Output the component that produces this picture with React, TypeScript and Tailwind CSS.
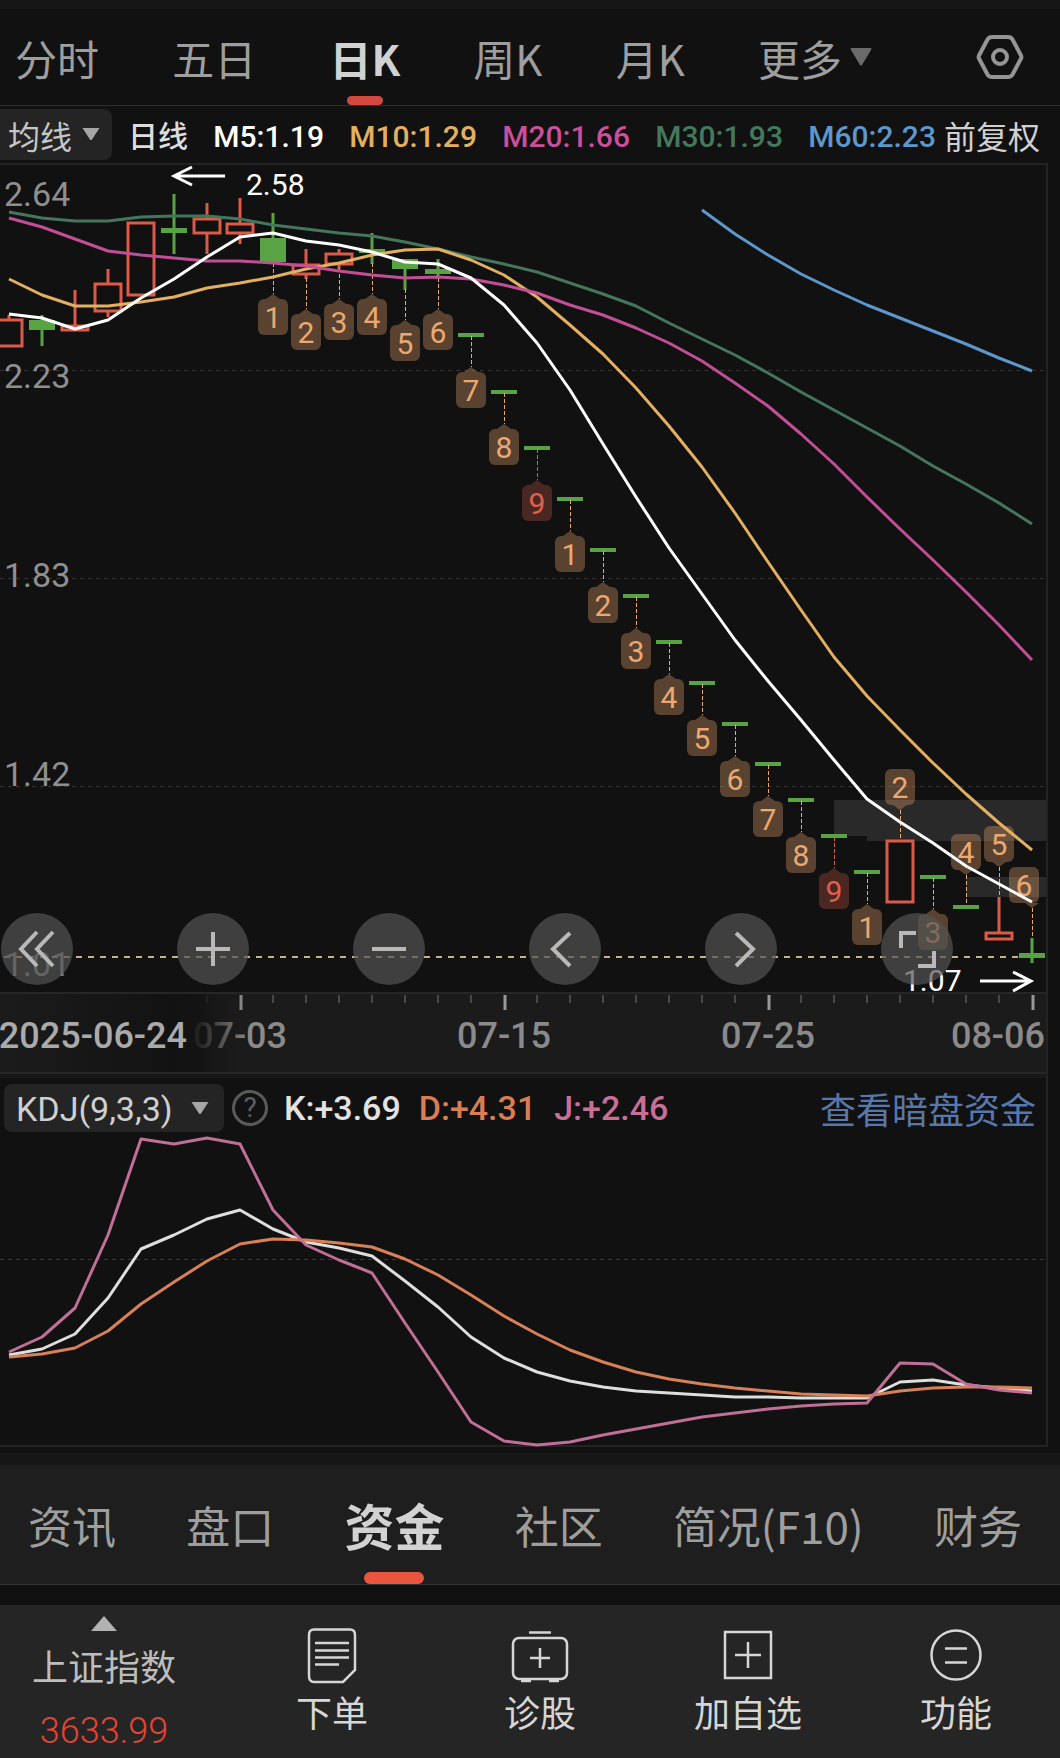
import { useState } from 'react';
import type { ReactNode } from 'react';
import clsx from 'clsx';

type Candle = {
  up?: boolean;
  body: [number, number];
  wick?: [number, number];
};

type Tag = {
  index: number;
  label: string;
  above?: boolean;
  shift?: number;
};

const RED = '#dc5a48';
const GREEN = '#5aa345';

const xOf = (index: number) => 9 + index * 33;

// One entry for each trading day, in chart coordinates
const candles: Candle[] = [
  { up: true, body: [319, 347], wick: [315, 347] },
  { body: [320, 330], wick: [315, 346] },
  { up: true, body: [325, 331], wick: [290, 331] },
  { up: true, body: [283, 312], wick: [269, 317] },
  { up: true, body: [222, 296] },
  { body: [228, 233], wick: [194, 254] },
  { up: true, body: [218, 234], wick: [203, 254] },
  { up: true, body: [223, 234], wick: [198, 244] },
  { body: [238, 262], wick: [213, 264] },
  { up: true, body: [264, 275], wick: [249, 279] },
  { up: true, body: [253, 265], wick: [249, 269] },
  { body: [249, 253], wick: [233, 264] },
  { body: [259, 269], wick: [259, 290] },
  { body: [269, 274], wick: [259, 279] },
  { body: [333, 337] },
  { body: [390, 394] },
  { body: [446, 450] },
  { body: [497, 501] },
  { body: [548, 552] },
  { body: [594, 598] },
  { body: [640, 644] },
  { body: [681, 685] },
  { body: [722, 726] },
  { body: [762, 766] },
  { body: [798, 802] },
  { body: [834, 838] },
  { body: [870, 874] },
  { up: true, body: [840, 903] },
  { body: [875, 879] },
  { body: [905, 909] },
  { up: true, body: [932, 940], wick: [897, 940] },
  { body: [953, 958], wick: [938, 963] },
];

const tags: Tag[] = [
  { index: 8, label: '1' },
  { index: 9, label: '2' },
  { index: 10, label: '3' },
  { index: 11, label: '4' },
  { index: 12, label: '5' },
  { index: 13, label: '6' },
  { index: 14, label: '7' },
  { index: 15, label: '8' },
  { index: 16, label: '9' },
  { index: 17, label: '1' },
  { index: 18, label: '2' },
  { index: 19, label: '3' },
  { index: 20, label: '4' },
  { index: 21, label: '5' },
  { index: 22, label: '6' },
  { index: 23, label: '7' },
  { index: 24, label: '8' },
  { index: 25, label: '9' },
  { index: 26, label: '1' },
  { index: 27, label: '2', above: true },
  { index: 28, label: '3' },
  { index: 29, label: '4', above: true },
  { index: 30, label: '5', above: true },
  { index: 31, label: '6', above: true, shift: -8 },
];

const averages = [
  {
    color: '#45765d',
    start: 0,
    values: [212, 218, 221, 221, 217, 216, 216, 219, 225, 229, 233, 236, 242, 249, 257, 264, 272, 283, 294, 306, 323, 339, 355, 373, 392, 410, 428, 446, 466, 484, 503, 524],
  },
  {
    color: '#e2b060',
    start: 0,
    values: [279, 295, 306, 306, 302, 297, 288, 283, 277, 269, 263, 255, 250, 249, 260, 275, 297, 325, 354, 388, 426, 467, 513, 562, 610, 657, 696, 730, 763, 794, 823, 850],
  },
  {
    color: '#c24f96',
    start: 0,
    values: [218, 227, 239, 251, 255, 258, 261, 261, 263, 266, 271, 275, 278, 277, 279, 285, 293, 305, 315, 328, 343, 361, 383, 406, 434, 464, 497, 529, 560, 592, 625, 660],
  },
  {
    color: '#ffffff',
    start: 0,
    values: [314, 318, 329, 320, 298, 279, 257, 237, 233, 241, 245, 252, 262, 264, 278, 305, 343, 390, 444, 497, 548, 594, 640, 681, 720, 760, 799, 822, 843, 866, 884, 902],
  },
  {
    color: '#5d97cb',
    start: 21,
    values: [210, 234, 255, 274, 290, 305, 318, 331, 344, 358, 371],
  },
];

const kdjLines = [
  {
    color: '#dedede',
    values: [1355, 1349, 1334, 1298, 1249, 1235, 1219, 1210, 1229, 1242, 1248, 1256, 1281, 1307, 1337, 1358, 1372, 1381, 1387, 1391, 1393, 1395, 1397, 1397, 1398, 1398, 1398, 1382, 1380, 1385, 1388, 1391],
  },
  {
    color: '#d88058',
    values: [1357, 1354, 1348, 1331, 1304, 1282, 1261, 1244, 1239, 1240, 1243, 1247, 1259, 1275, 1295, 1316, 1334, 1350, 1362, 1372, 1379, 1384, 1388, 1391, 1394, 1395, 1396, 1391, 1388, 1387, 1387, 1388],
  },
  {
    color: '#c06f95',
    values: [1352, 1337, 1308, 1235, 1139, 1144, 1138, 1144, 1210, 1245, 1260, 1273, 1323, 1372, 1422, 1441, 1445, 1442, 1435, 1429, 1423, 1417, 1413, 1409, 1406, 1404, 1403, 1363, 1364, 1384, 1390, 1393],
  },
];

const priceLabels = [
  { y: 206, text: '2.64' },
  { y: 388, text: '2.23' },
  { y: 587, text: '1.83' },
  { y: 786, text: '1.42' },
  { y: 976, text: '1.01' },
];

const legend = [
  { text: 'M5:1.19', className: 'text-white' },
  { text: 'M10:1.29', className: 'text-[#e2b060]' },
  { text: 'M20:1.66', className: 'text-[#cb4f9b]' },
  { text: 'M30:1.93', className: 'text-[#45795e]' },
  { text: 'M60:2.23', className: 'text-[#5d97cb]' },
];

const toPoints = (values: number[], start = 0) =>
  values.map((y, i) => `${xOf(start + i)},${y}`).join(' ');

function Caret({ className }: { className?: string }) {
  return (
    <svg viewBox="0 0 20 14" className={clsx('pointer-events-none', className)} aria-hidden="true">
      <path d="M1.5 1h17L11 12.6q-1 1-2 0z" fill="currentColor" />
    </svg>
  );
}

function CandleShape({ index, candle }: { index: number; candle: Candle }) {
  const x = xOf(index);
  const [top, bottom] = candle.body;
  const color = candle.up ? RED : GREEN;

  return (
    <g>
      {candle.wick && candle.wick[0] < top && (
        <path d={`M${x} ${candle.wick[0]}V${top}`} stroke={color} strokeWidth="3" />
      )}
      {candle.wick && candle.wick[1] > bottom && (
        <path d={`M${x} ${bottom}V${candle.wick[1]}`} stroke={color} strokeWidth="3" />
      )}
      {candle.up ? (
        <rect x={x - 13} y={top + 1} width="26" height={bottom - top - 2} fill="none" stroke={color} strokeWidth="3" />
      ) : (
        <rect x={x - 13} y={top} width="26" height={bottom - top} fill={color} />
      )}
    </g>
  );
}

function TagShape({ tag }: { tag: Tag }) {
  const x = xOf(tag.index);
  const { body, wick } = candles[tag.index];
  const [high, low] = wick ?? body;
  const tip = tag.above ? high - 30 : low + 30;
  const boxX = x - 15 + (tag.shift ?? 0);
  const boxY = tag.above ? tip - 41 : tip + 5;
  const color = tag.label === '9' ? '#e2604b' : '#eba871';

  return (
    <g>
      <path
        d={tag.above ? `M${x}.5 ${tip}V${high}` : `M${x}.5 ${low - 1}V${tip}`}
        stroke={color}
        strokeWidth="1"
        strokeDasharray="4 2"
      />
      <g fill={color} opacity={tag.label === '9' ? 0.28 : 0.33}>
        <rect x={boxX} y={boxY} width="30" height="36" rx="6" />
        <path d={tag.above ? `M${x - 7} ${tip - 5}h14l-7 5z` : `M${x - 7} ${tip + 5}h14l-7 -5z`} />
      </g>
      <text x={boxX + 15} y={boxY + 29} textAnchor="middle" fill={color} className="text-[30px]">
        {tag.label}
      </text>
    </g>
  );
}

function PriceChart() {
  return (
    <svg viewBox="0 165 1046 829" className="block w-full overflow-visible" role="img" aria-label="日K线图">
      <rect x="834" y="800" width="212" height="36" fill="#292929" />
      <rect x="867" y="836" width="179" height="5" fill="#292929" />
      <rect x="966" y="877" width="80" height="20" fill="#292929" />

      {[370, 578, 786].map(y => (
        <path key={y} d={`M0 ${y}.5H1046`} stroke="#333333" strokeDasharray="4 4" />
      ))}
      <path d="M4 957H1020" stroke="#c8b184" strokeWidth="2" strokeDasharray="6 6" />
      <path d="M0 993H1046" stroke="#262626" strokeWidth="2" />

      {priceLabels.map(label => (
        <text key={label.text} x="4" y={label.y} fill="#8f8f8f" className="text-[34px]">
          {label.text}
        </text>
      ))}

      {candles.map((candle, i) => (
        <CandleShape key={i} index={i} candle={candle} />
      ))}
      {tags.map(tag => (
        <TagShape key={tag.index} tag={tag} />
      ))}
      {averages.map(line => (
        <polyline
          key={line.color}
          points={toPoints(line.values, line.start)}
          fill="none"
          stroke={line.color}
          strokeWidth="3"
          strokeLinejoin="round"
        />
      ))}

      {/* Highest and lowest price */}
      <path d="M225 176H174M192 167L174 176L192 185" fill="none" stroke="#ffffff" strokeWidth="3" />
      <text x="246" y="195" fill="#ffffff" className="text-[30px]">2.58</text>
      <path d="M980 981H1031M1013 972L1031 981L1013 991" fill="none" stroke="#ffffff" strokeWidth="3" />
      <text x="903" y="991" fill="#ffffff" className="text-[30px]">1.07</text>
    </svg>
  );
}

function DateAxis() {
  const ticks = candles.map((_, i) => i);

  return (
    <svg viewBox="0 994 1046 78" className="block w-full" role="img" aria-label="日期">
      <defs>
        <linearGradient id="axis-fade">
          <stop offset="0" stopColor="#1b1b1b" />
          <stop offset="0.7" stopColor="#121212" />
          <stop offset="0.8" stopColor="#121212" stopOpacity="0.85" />
          <stop offset="1" stopColor="#1b1b1b" stopOpacity="0" />
        </linearGradient>
      </defs>
      {ticks.map(i =>
        i % 8 === 7 ? (
          <path key={i} d={`M${xOf(i) + 1} 995v15`} stroke="#999999" strokeWidth="3" />
        ) : (
          <path key={i} d={`M${xOf(i)} 995v8`} stroke="#484848" strokeWidth="2" />
        ),
      )}
      <g fill="#8a8a8a" textAnchor="middle" className="text-[36px] font-medium">
        <text x="240" y="1048">07-03</text>
        <text x="504" y="1048">07-15</text>
        <text x="768" y="1048">07-25</text>
        <text x="1045" y="1048" textAnchor="end">08-06</text>
      </g>
      <rect x="0" y="994" width="250" height="78" fill="url(#axis-fade)" />
      <text x="187" y="1048" textAnchor="end" fill="#aaaaaa" className="text-[36px] font-medium">
        2025-06-24
      </text>
    </svg>
  );
}

function KdjChart() {
  return (
    <svg viewBox="0 1138 1046 307" className="block w-full overflow-visible" role="img" aria-label="KDJ">
      <path d="M0 1259.5H1046" stroke="#383838" strokeDasharray="4 4" />
      {kdjLines.map(line => (
        <polyline
          key={line.color}
          points={toPoints(line.values)}
          fill="none"
          stroke={line.color}
          strokeWidth="3"
          strokeLinejoin="round"
        />
      ))}
    </svg>
  );
}

const chartControls = [
  { label: '最早', path: 'M36 19L20 36L36 53M52 19L36 36L52 53' },
  { label: '放大', path: 'M36 19V53M19 36H53' },
  { label: '缩小', path: 'M19 36H53' },
  { label: '向左', path: 'M41 20L24 36L41 53' },
  { label: '向右', path: 'M31 20L48 36L31 53' },
  { label: '全屏', path: 'M20 35V20H35M53 38V53H37' },
];

const periods = ['分时', '五日', '日K', '周K', '月K'];
const sections = ['资讯', '盘口', '资金', '社区', '简况(F10)', '财务'];

const actions: { label: string; icon: ReactNode }[] = [
  {
    label: '下单',
    icon: (
      <>
        <path d="M12 4.500H48Q53 4.500 53 10V45L41 57H12Q7 57 7 51V10Q7 4.500 12 4.500Z" />
        <path d="M13 18H47M13 25.500H47M13 32.500H47M13 39.500H37" />
      </>
    ),
  },
  {
    label: '诊股',
    icon: (
      <>
        <rect x="3" y="13" width="54" height="41" rx="6" />
        <path d="M19 7.500H41M30 23V43M20 33H40M11 56H21M39 56H49" />
      </>
    ),
  },
  {
    label: '加自选',
    icon: (
      <>
        <rect x="7" y="7" width="46" height="46" />
        <path d="M30 17V43M17 30H43" />
      </>
    ),
  },
  {
    label: '功能',
    icon: (
      <>
        <circle cx="30" cy="30" r="24.500" />
        <path d="M19 23.500H41M19 37.500H41" />
      </>
    ),
  },
];

export default function App() {
  const [period, setPeriod] = useState('日K');
  const [section, setSection] = useState('资金');

  return (
    <div className="min-h-screen w-full overflow-hidden bg-[#111111] font-['Roboto','Noto_Sans_CJK_SC',sans-serif]">
      {/* Period tabs */}
      <div className="h-[9px] bg-[#161616]" />
      <header className="flex h-[97px] items-center border-b border-[#303030] pr-9 pl-[15px] font-['Noto_Sans_CJK_SC',sans-serif] text-[42px]">
        <nav className="mr-[104px] flex h-full flex-1 items-stretch justify-between">
          {periods.map(name => (
            <button
              key={name}
              onClick={() => setPeriod(name)}
              className={clsx(
                'relative whitespace-nowrap',
                period === name ? 'font-bold text-[#d2d2d2]' : 'text-[#9e9e9e]',
              )}
            >
              {name}
              {period === name && (
                <span className="absolute bottom-0 left-1/2 h-[9px] w-9 -translate-x-1/2 rounded-full bg-[#d4493f]" />
              )}
            </button>
          ))}
          <button aria-haspopup="menu" className="flex items-center gap-2 whitespace-nowrap text-[#9e9e9e]">
            更多
            <svg viewBox="0 0 22 18" className="h-[18px] w-[22px] text-[#6b6b6b]" aria-hidden="true">
              <path d="M1 0h20q1 1 0 2L12 17q-1 1-2 0L1 2q-1-1 0-2z" fill="currentColor" />
            </svg>
          </button>
        </nav>
        <button aria-label="设置">
          <svg viewBox="0 0 48 46" className="h-[46px] w-12" fill="none" stroke="#959595" strokeLinejoin="round">
            <path d="M3 21.500L11.500 5.500Q13 3 16 3H32Q35 3 36.500 5.500L45 21.500Q45.800 23 45 24.500L36.500 40.500Q35 43 32 43H16Q13 43 11.500 40.500L3 24.500Q2.200 23 3 21.500Z" strokeWidth="4" />
            <circle cx="24" cy="23" r="7" strokeWidth="4" />
          </svg>
        </button>
      </header>

      {/* Moving averages */}
      <div className="flex h-[57px] items-center pr-5">
        <div className="relative h-[51px] w-28 shrink-0">
          <select
            aria-label="指标"
            className="h-full w-full appearance-none rounded-r-lg bg-[#242424] pl-2 font-['Noto_Sans_CJK_SC',sans-serif] text-[32px] text-[#c6c6c6] outline-none"
          >
            <option>均线</option>
          </select>
          <Caret className="absolute top-[18px] right-[11px] h-[14px] w-5 text-[#a5a5a5]" />
        </div>
        <div className="ml-4 flex flex-1 items-center justify-between pt-[3px] text-[30px] font-medium whitespace-nowrap">
          <span className="text-[#dddddd]">日线</span>
          {legend.map(item => (
            <span key={item.text} className={item.className}>{item.text}</span>
          ))}
        </div>
        <span className="ml-2 font-['Noto_Sans_CJK_SC',sans-serif] text-[32px] whitespace-nowrap text-[#d0d0d0]">
          前复权
        </span>
      </div>

      <main className="mr-3 border-t-2 border-r-2 border-[#232323]">
        <div className="relative">
          <PriceChart />
          <div className="absolute right-[93px] bottom-[9px] left-px flex justify-between">
            {chartControls.map(control => (
              <button
                key={control.label}
                aria-label={control.label}
                className="h-[72px] w-[72px] rounded-full bg-[#525252]/70"
              >
                <svg viewBox="0 0 72 72" fill="none" stroke="#b9b9b9" strokeWidth="4">
                  <path d={control.path} />
                </svg>
              </button>
            ))}
          </div>
        </div>

        <div className="border-b-2 border-[#262626] bg-[#1b1b1b]">
          <DateAxis />
        </div>
        <div className="h-1 bg-[#171717]" />

        {/* KDJ */}
        <div className="flex h-[60px] items-center pr-[10px] pl-1 text-[34px] whitespace-nowrap">
          <div className="relative h-12 w-[220px]">
            <select
              aria-label="副图指标"
              className="h-full w-full appearance-none rounded-lg bg-[#242424] pl-3 text-[34px] text-[#cfcfcf] outline-none"
            >
              <option>KDJ(9,3,3)</option>
            </select>
            <Caret className="absolute top-[17px] right-[14px] h-[14px] w-5 text-[#a5a5a5]" />
          </div>
          <button
            aria-label="说明"
            className="ml-2 flex h-9 w-9 items-center justify-center rounded-full border-[3px] border-[#5a5a5a] text-[28px] text-[#5f5f5f]"
          >
            ?
          </button>
          <div className="ml-4 flex gap-[18px] font-medium">
            <span className="text-[#e2e2e2]">K:+3.69</span>
            <span className="text-[#da7e52]">D:+4.31</span>
            <span className="text-[#c96f97]">J:+2.46</span>
          </div>
          <a href="#" className="ml-auto font-['Noto_Sans_CJK_SC',sans-serif] text-[36px] text-[#5878ab]">
            查看暗盘资金
          </a>
        </div>
        <div className="border-b-2 border-[#232323]">
          <KdjChart />
        </div>
      </main>
      <div className="mt-[6px] h-3 bg-[#161616]" />

      {/* Section tabs */}
      <nav className="flex h-[120px] items-stretch justify-between border-b border-[#333333] bg-[#1e1e1e] pr-[38px] pl-7 font-['Noto_Sans_CJK_SC',sans-serif]">
        {sections.map(name => (
          <button
            key={name}
            onClick={() => setSection(name)}
            className={clsx(
              'relative whitespace-nowrap',
              section === name ? 'text-[50px] font-bold text-[#d2d2d2]' : 'text-[44px] text-[#9e9e9e]',
            )}
          >
            {name}
            {section === name && (
              <span className="absolute bottom-0 left-1/2 h-3 w-[60px] -translate-x-1/2 rounded-full bg-[#ea5540]" />
            )}
          </button>
        ))}
      </nav>

      {/* Bottom bar */}
      <footer className="mt-5 flex h-[153px] bg-[#252525] text-[36px] leading-10 whitespace-nowrap">
        <button className="flex w-[228px] flex-col items-center pt-[11px] pr-5 text-[#bdbdbd]">
          <svg viewBox="0 0 26 15" className="h-[15px] w-[26px]" aria-hidden="true">
            <path d="M13 0L26 15H0z" fill="#b2b2b2" />
          </svg>
          <span className="mt-[18px]">上证指数</span>
          <span className="mt-[22px] font-light text-[#e24536]">3633.99</span>
        </button>
        {actions.map(action => (
          <button key={action.label} className="flex flex-1 flex-col items-center justify-start pt-5 text-[#d6d6d6]">
            <svg viewBox="0 0 60 60" className="h-[60px] w-[60px]" fill="none" stroke="currentColor" strokeWidth="2.500">
              {action.icon}
            </svg>
            <span className="mt-[10px]">{action.label}</span>
          </button>
        ))}
      </footer>
    </div>
  );
}
